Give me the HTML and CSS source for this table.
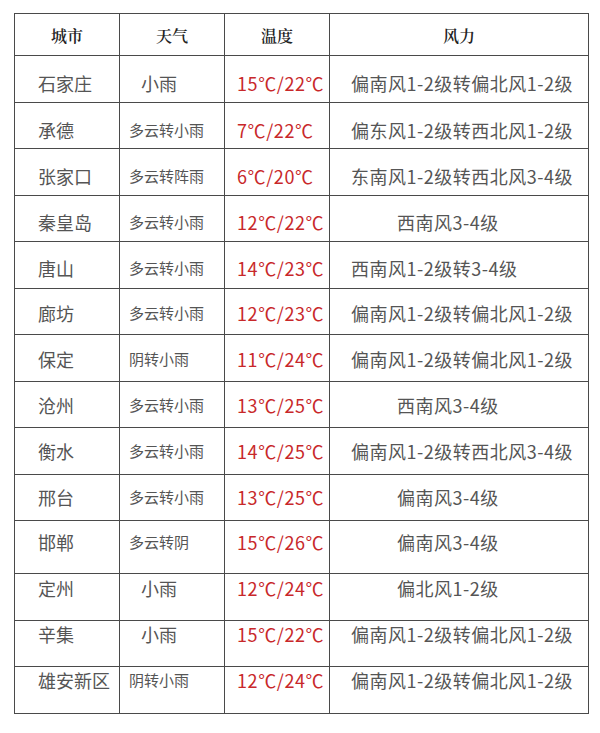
FILE: index.html
```html
<!DOCTYPE html>
<html lang="zh">
<head>
<meta charset="utf-8">
<title>天气预报</title>
<link rel="stylesheet" href="styles.css">
</head>
<body>
<table class="weather">
  <colgroup>
    <col class="c-city"><col class="c-wx"><col class="c-temp"><col class="c-wind">
  </colgroup>
  <thead>
    <tr class="head"><th>城市</th><th>天气</th><th>温度</th><th>风力</th></tr>
  </thead>
  <tbody>
    <tr class="p15"><td class="city">石家庄</td><td class="wx big">小雨</td><td class="temp">15℃/22℃</td><td class="wind">偏南风1-2级转偏北风1-2级</td></tr>
    <tr class="p15"><td class="city">承德</td><td class="wx">多云转小雨</td><td class="temp">7℃/22℃</td><td class="wind">偏东风1-2级转西北风1-2级</td></tr>
    <tr class="p15"><td class="city">张家口</td><td class="wx">多云转阵雨</td><td class="temp">6℃/20℃</td><td class="wind">东南风1-2级转西北风3-4级</td></tr>
    <tr class="p14"><td class="city">秦皇岛</td><td class="wx">多云转小雨</td><td class="temp">12℃/22℃</td><td class="wind short">西南风3-4级</td></tr>
    <tr class="p14"><td class="city">唐山</td><td class="wx">多云转小雨</td><td class="temp">14℃/23℃</td><td class="wind">西南风1-2级转3-4级</td></tr>
    <tr class="p12"><td class="city">廊坊</td><td class="wx">多云转小雨</td><td class="temp">12℃/23℃</td><td class="wind">偏南风1-2级转偏北风1-2级</td></tr>
    <tr class="p12"><td class="city">保定</td><td class="wx">阴转小雨</td><td class="temp">11℃/24℃</td><td class="wind">偏南风1-2级转偏北风1-2级</td></tr>
    <tr class="p11"><td class="city">沧州</td><td class="wx">多云转小雨</td><td class="temp">13℃/25℃</td><td class="wind short">西南风3-4级</td></tr>
    <tr class="p11"><td class="city">衡水</td><td class="wx">多云转小雨</td><td class="temp">14℃/25℃</td><td class="wind">偏南风1-2级转西北风3-4级</td></tr>
    <tr class="p10"><td class="city">邢台</td><td class="wx">多云转小雨</td><td class="temp">13℃/25℃</td><td class="wind short">偏南风3-4级</td></tr>
    <tr class="p9 tall"><td class="city">邯郸</td><td class="wx">多云转阴</td><td class="temp">15℃/26℃</td><td class="wind short">偏南风3-4级</td></tr>
    <tr class="p2"><td class="city">定州</td><td class="wx big">小雨</td><td class="temp">12℃/24℃</td><td class="wind short">偏北风1-2级</td></tr>
    <tr class="p1"><td class="city">辛集</td><td class="wx big">小雨</td><td class="temp">15℃/22℃</td><td class="wind">偏南风1-2级转偏北风1-2级</td></tr>
    <tr class="p1"><td class="city">雄安新区</td><td class="wx">阴转小雨</td><td class="temp">12℃/24℃</td><td class="wind">偏南风1-2级转偏北风1-2级</td></tr>
  </tbody>
</table>
</body>
</html>
```

FILE: styles.css
```css
html, body {
  margin: 0;
  padding: 0;
  background: #ffffff;
}

body {
  padding: 13px 0 0 14px;
  font-family: "Noto Sans CJK SC", "Noto Sans", sans-serif;
  color: #555555;
}

.weather {
  border-collapse: collapse;
  table-layout: fixed;
  width: 574px;
}

.c-city, .c-wx, .c-temp { width: 105px; }
.c-wind { width: 259px; }

.weather th,
.weather td {
  border: 1px solid #4a4a4a;
  padding: 0;
  white-space: nowrap;
  overflow: hidden;
}

.head { height: 42px; }

.weather th {
  font-family: "Noto Serif CJK SC", "Noto Sans CJK SC", serif;
  font-weight: 600;
  font-size: 16px;
  color: #222222;
  text-align: center;
  vertical-align: middle;
  padding-top: 2px;
  line-height: 22px;
}

.weather tbody tr { height: 46.5px; }
.weather tbody tr.tall { height: 53px; }

.weather td {
  vertical-align: top;
  text-align: left;
  line-height: 24px;
}

.p15 td { padding-top: 15px; }
.p14 td { padding-top: 14px; }
.p12 td { padding-top: 12px; }
.p11 td { padding-top: 11px; }
.p10 td { padding-top: 10px; }
.p9 td { padding-top: 9px; }
.p2 td { padding-top: 2px; }
.p1 td { padding-top: 1px; }

.city {
  font-size: 18px;
  padding-left: 23px !important;
}

.wx {
  font-size: 15px;
  padding-left: 9px !important;
}

.wx.big {
  font-size: 18px;
  padding-left: 21px !important;
}

.temp {
  font-size: 18px;
  letter-spacing: 0.6px;
  color: #c8282a;
  padding-left: 12px !important;
}

.wind {
  font-size: 18px;
  letter-spacing: 0.5px;
  padding-left: 21px !important;
}

.wind.short {
  padding-left: 67px !important;
}
```
